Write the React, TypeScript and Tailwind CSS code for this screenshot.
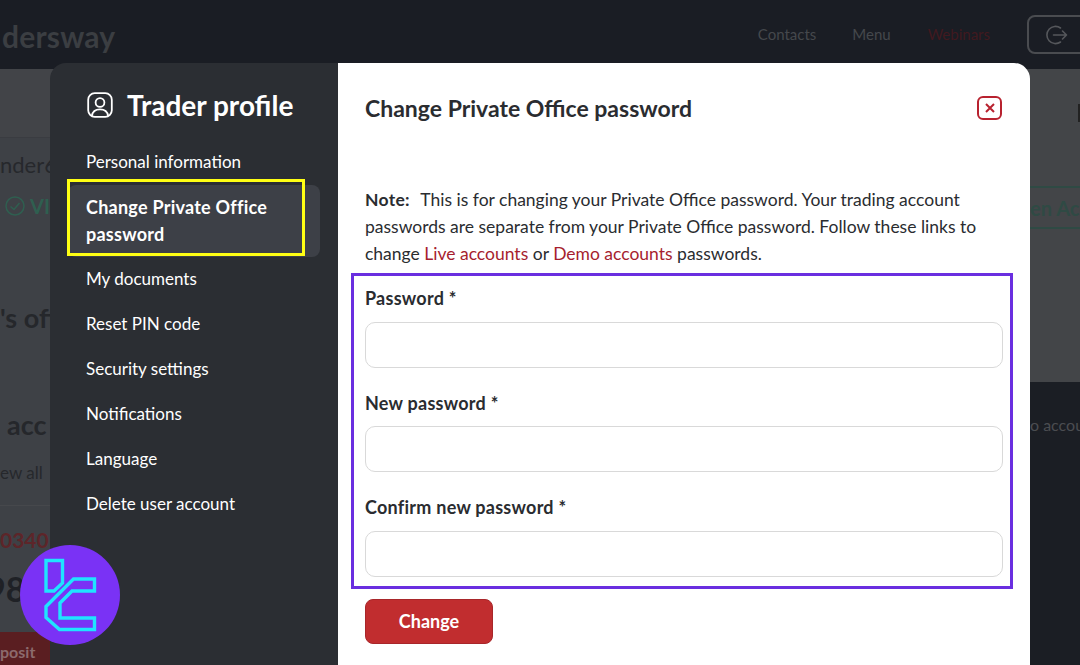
const FONT = "font-['Lato','Noto_Sans',sans-serif]";

const MENU = [
  { label: "Personal information" },
  { label: "Change Private Office password", active: true },
  { label: "My documents" },
  { label: "Reset PIN code" },
  { label: "Security settings" },
  { label: "Notifications" },
  { label: "Language" },
  { label: "Delete user account" },
];

const FIELDS = ["Password *", "New password *", "Confirm new password *"];

function TraderLogo() {
  return (
    <svg viewBox="0 0 100 100" className="h-[100px] w-[100px]" aria-hidden="true">
      <circle cx="50" cy="50" r="50" fill="#7a32f5" />
      <g fill="none" stroke="#1fe4ff" strokeWidth="3.4" strokeLinejoin="miter">
        <path d="M26 15.5 H42.5 V38 L34 46 H26 Z" />
        <path d="M53.5 34 H74.5 V46 H52 L40 58 V73 H74.5 V84.5 H39.5 L26 72.5 V61.5 Z" />
      </g>
    </svg>
  );
}

function ProfileIcon() {
  return (
    <svg viewBox="0 0 26 26" className="h-[26px] w-[26px] shrink-0" fill="none" stroke="white" strokeWidth="1.8" aria-hidden="true">
      <rect x="1.2" y="1.2" width="23.6" height="23.6" rx="6.5" />
      <circle cx="13" cy="10.5" r="4.4" />
      <path d="M4.8 24 C5.6 19.2 9 17.4 13 17.4 C17 17.4 20.4 19.2 21.2 24" />
    </svg>
  );
}

function ExitIcon() {
  return (
    <svg viewBox="0 0 22 22" className="h-[22px] w-[22px]" fill="none" stroke="#55575b" strokeWidth="1.6" strokeLinecap="round" strokeLinejoin="round" aria-hidden="true">
      <path d="M14.5 4 A8.6 8.6 0 1 0 14.5 18" />
      <path d="M7.5 11 H20.5 M16.5 7 L20.5 11 L16.5 15" />
    </svg>
  );
}

function Header() {
  return (
    <header className="flex h-[69px] shrink-0 items-center justify-between bg-[#1a1d24] pl-[2px]">
      <span className="pt-[3px] text-[30px] font-bold leading-none tracking-[0.2px] text-[#3b3e42]">dersway</span>
      <div className="flex items-center text-[15px]">
        <span className="mr-[36px] text-[#45484c]">Contacts</span>
        <span className="mr-[37px] text-[#45484c]">Menu</span>
        <span className="mr-[37px] text-[#41191f]">Webinars</span>
        <div className="-mr-[20px] flex h-[39px] w-[73px] items-center rounded-lg border-2 border-[#4a4c50] pl-[17px]">
          <ExitIcon />
        </div>
      </div>
    </header>
  );
}

function PageBehind() {
  return (
    <div className="flex min-h-0 flex-1">
      <div className="flex w-[540px] flex-col bg-[#3e4146]">
        <div className="h-[68px] bg-[#424448]" />
        <div className="h-px bg-[#3a3c41]" />
        <p className="mt-[14px] text-[22px] leading-[26px] text-[#26282c]">nder6</p>
        <div className="mt-[13px] flex items-center gap-[5px] pl-[5px]">
          <svg viewBox="0 0 20 20" className="h-[20px] w-[20px]" fill="none" stroke="#2f5f50" strokeWidth="1.5" aria-hidden="true">
            <circle cx="10" cy="10" r="9" />
            <path d="M5.5 10.5 L9 13.5 L14.5 7" />
          </svg>
          <span className="text-[20px] font-bold text-[#2f5f50]">VI</span>
        </div>
        <p className="mt-[80px] text-[27px] font-bold leading-[34px] text-[#25272b]">'s off</p>
        <p className="mt-[73px] pl-[7px] text-[27px] font-bold leading-[34px] text-[#25272b]">acc</p>
        <p className="mt-[19px] text-[17px] leading-[24px] text-[#26282c]">ew all</p>
        <div className="mt-[20px] h-px bg-[#46484c]" />
        <p className="mt-[20px] text-[21px] font-bold leading-[28px] text-[#5d2529]">0340</p>
        <p className="-ml-[14px] mt-[15px] text-[34px] font-bold leading-[40px] text-[#1f2126]">98</p>
        <div className="mt-auto h-[33px] w-[50px] overflow-hidden whitespace-nowrap bg-[#5a1e21] pt-[8px] text-[16px] font-bold text-[#8c6a6c]">posit</div>
      </div>
      <div className="flex min-w-0 flex-1 flex-col overflow-hidden bg-[#1b1e24]">
        <div className="flex h-[313px] flex-col items-end bg-[#434548]">
          <div className="mt-[35px] h-[18px] w-[2px] bg-[#222]" />
          <div className="mt-[64px] flex h-[43px] w-full items-center overflow-hidden whitespace-nowrap border-y-2 border-[#2f4a44] pl-[490px] text-[20px] font-bold text-[#2f4a44]">
            en Account
          </div>
        </div>
        <p className="mt-[31px] whitespace-nowrap pl-[490px] text-[16px] leading-[24px] text-[#4b4d51]">o accounts</p>
      </div>
    </div>
  );
}

function Sidebar() {
  return (
    <aside className="flex w-[288px] shrink-0 flex-col bg-[#2b2e33] px-[18px] text-white">
      <div className="flex h-[76.5px] items-center pl-[19px] pt-[8px]">
        <div className="flex items-center gap-[14px]">
          <ProfileIcon />
          <h2 className="text-[28px] font-bold leading-[34px]">Trader profile</h2>
        </div>
      </div>
      <nav className="flex flex-col">
        {MENU.map((item) =>
          item.active ? (
            <div key={item.label} className="relative rounded-lg bg-[#3d4047] py-[9px] pl-[18px] pr-[40px] text-[18px] font-bold leading-[27px] tracking-[0.25px]">
              {item.label}
              <div className="pointer-events-none absolute -left-[1px] -top-[6px] h-[77px] w-[238px] border-[3px] border-[#ffff14]" />
            </div>
          ) : (
            <div key={item.label} className="pb-[10px] pl-[18px] pt-[8px] text-[17px] leading-[27px]">
              {item.label}
            </div>
          ),
        )}
      </nav>
    </aside>
  );
}

function PasswordForm() {
  return (
    <main className="flex min-w-0 flex-1 flex-col bg-white px-[27px] text-[#2a2c30]">
      <div className="flex h-[89px] items-center justify-between">
        <h1 className="text-[23px] font-bold leading-[30px]">Change Private Office password</h1>
        <button className="mr-[1px] flex h-[24px] w-[25px] items-center justify-center rounded-md border-2 border-[#b8222f] text-[#b8222f]">
          <svg viewBox="0 0 10 10" className="h-[10px] w-[10px]" fill="none" stroke="currentColor" strokeWidth="2" aria-hidden="true">
            <path d="M1 1 L9 9 M9 1 L1 9" />
          </svg>
        </button>
      </div>
      <p className="mt-[34px] text-[17.5px] leading-[27px]">
        <strong className="mr-[2px] font-bold tracking-[0.3px]">Note:</strong>&nbsp; This is for changing your Private Office password. Your trading account passwords are separate from your Private Office password. Follow these links to change <span className="text-[#a61e2e]">Live accounts</span> or <span className="text-[#a61e2e]">Demo accounts</span> passwords.
      </p>
      <div className="relative mt-[18px] flex flex-col gap-[22.1px]">
        {FIELDS.map((label) => (
          <label key={label} className="block text-[18px] font-bold leading-[27px] tracking-[0.25px]">
            {label}
            <input type="password" className="mt-[9.5px] block h-[46px] w-full rounded-[10px] border border-[#d9d9d9] bg-white" />
          </label>
        ))}
        <div className="pointer-events-none absolute -bottom-[12px] -left-[14px] -right-[10px] -top-[12px] border-[3px] border-[#6a2ee0]" />
      </div>
      <button className="mt-[22px] h-[45px] w-[128px] rounded-lg border border-[#a8262a] bg-[#c12d2f] text-[18px] font-bold text-white">Change</button>
    </main>
  );
}

export default function App() {
  return (
    <div className={`relative flex h-[665px] w-[1080px] flex-col overflow-hidden ${FONT}`}>
      <Header />
      <PageBehind />
      {/* modal over the dimmed page */}
      <div className="absolute left-[50px] top-[63px] flex h-[640px] w-[980px] overflow-hidden rounded-t-2xl">
        <Sidebar />
        <PasswordForm />
      </div>
      <div className="absolute left-[20px] top-[545px]">
        <TraderLogo />
      </div>
    </div>
  );
}
